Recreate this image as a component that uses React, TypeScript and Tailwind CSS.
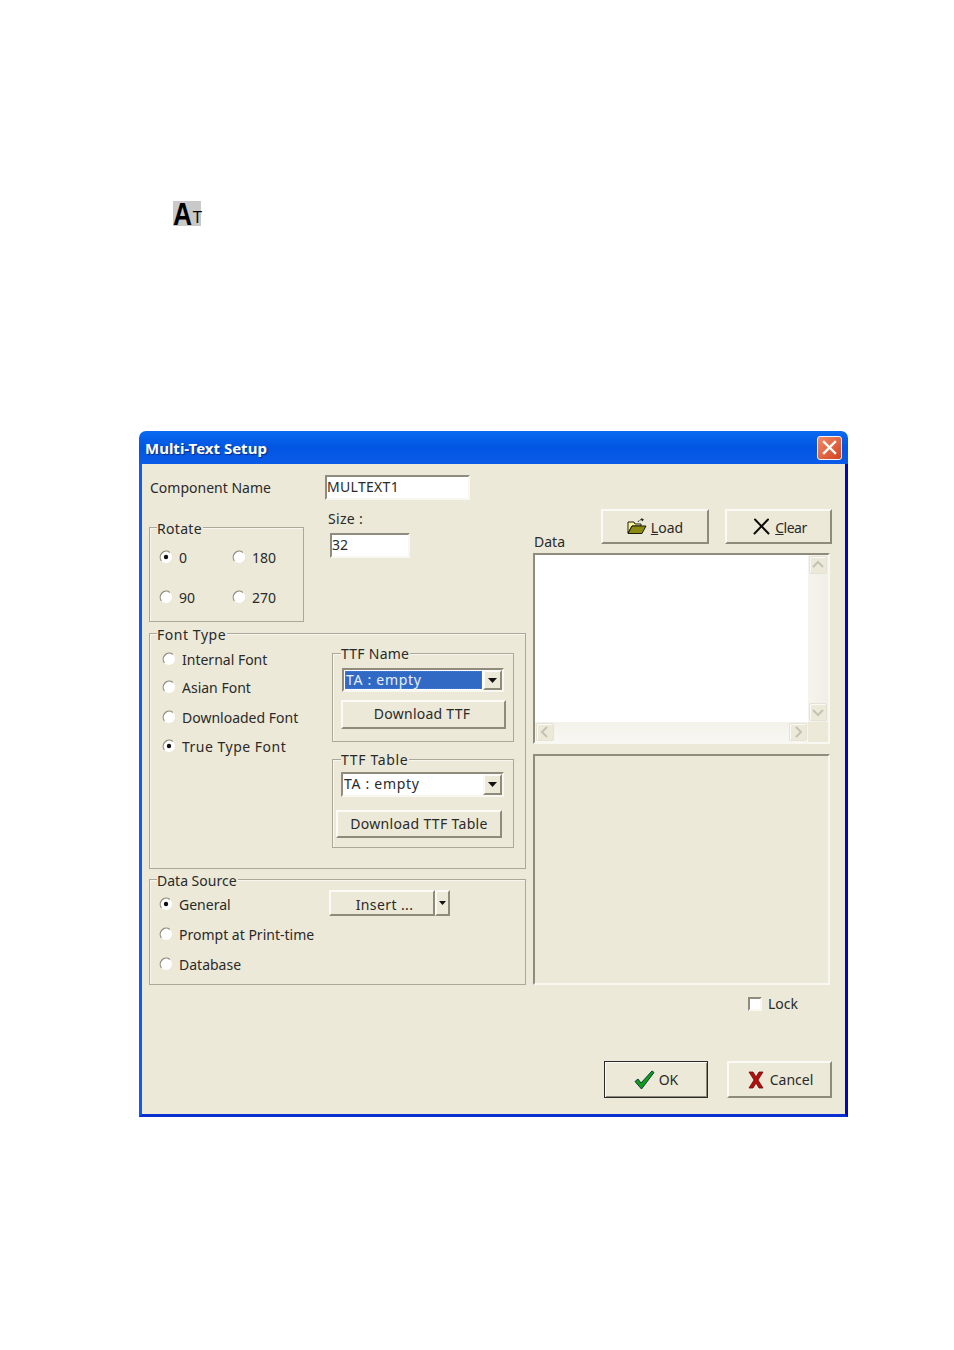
import { ReactNode } from "react"

const raised =
  "border-2 border-t-[#fbfaf6] border-l-[#fbfaf6] border-r-[#8e8b7b] border-b-[#8e8b7b] bg-[#ece9d8]"
const sunken =
  "border-2 border-t-[#8f8c7d] border-l-[#8f8c7d] border-r-[#f8f7f1] border-b-[#f8f7f1]"
const group =
  "relative border border-[#aaa89b] shadow-[inset_1px_1px_0_#f7f6ef]"

function Radio({
  checked,
  label,
  className,
  labelClass,
}: {
  checked?: boolean
  label: string
  className?: string
  labelClass?: string
}) {
  return (
    <div className={`flex h-[16px] items-center gap-[6px] ${className ?? ""}`}>
      <svg width="14" height="14" viewBox="0 0 14 14" className="shrink-0">
        <circle cx="7" cy="7" r="6" fill="#ffffff" />
        <path d="M10.8 2.4A6 6 0 0 0 2.4 10.8" fill="none" stroke="#8f8c7d" strokeWidth="1.2" />
        {checked && <circle cx="7" cy="7" r="2.2" fill="#111111" />}
      </svg>
      <span className={`whitespace-nowrap pt-[2px] ${labelClass ?? ""}`}>{label}</span>
    </div>
  )
}

function Group({
  title,
  className,
  titleClass = "left-[7px] top-[-7px]",
  children,
}: {
  title: string
  className: string
  titleClass?: string
  children: ReactNode
}) {
  return (
    <div className={`${group} ${className}`}>
      <span className={`absolute bg-[#ece9d8] pr-[1px] leading-[16px] ${titleClass}`}>{title}</span>
      {children}
    </div>
  )
}

function Arrow() {
  return (
    <svg width="9" height="5" viewBox="0 0 9 5">
      <path d="M0 0h9L4.5 5z" fill="#111111" />
    </svg>
  )
}

function Select({ selected, className }: { selected?: boolean; className: string }) {
  return (
    <div className={`${sunken} flex bg-white ${className}`}>
      <div className="flex min-w-0 flex-1 items-center p-[1px] tracking-[0.7px]">
        {selected ? (
          <span className="flex h-full w-full items-center border border-dotted border-[#7a7a50] bg-[#316ac5] text-[#e8eefa]">
            TA : empty
          </span>
        ) : (
          <span className="mt-[-1px]">TA : empty</span>
        )}
      </div>
      <div className={`${raised} flex w-[19px] items-center justify-center`}>
        <Arrow />
      </div>
    </div>
  )
}

function ScrollButton({ dir, className }: { dir: "up" | "down" | "left" | "right"; className?: string }) {
  const points = {
    up: "3,10 8,5 13,10",
    down: "3,6 8,11 13,6",
    left: "10,3 5,8 10,13",
    right: "6,3 11,8 6,13",
  }[dir]
  return (
    <div className={`h-[18px] w-[18px] shrink-0 rounded-[2px] border border-[#e4e2d6] bg-[#ece9d8] shadow-[inset_1px_1px_0_#fbfaf6] ${className ?? ""}`}>
      <svg width="16" height="16" viewBox="0 0 16 16">
        <polyline points={points} fill="none" stroke="#c4c2b6" strokeWidth="2" />
      </svg>
    </div>
  )
}

function FolderIcon() {
  return (
    <svg width="20" height="17" viewBox="0 0 20 17">
      <path d="M11 4c1-2 3-3 5-2" fill="none" stroke="#222" strokeWidth="1" strokeDasharray="2 1" />
      <path d="M14 0l3 1.500-2 2z" fill="#222" />
      <path d="M1 15V4h6l1 2h6v2H5L1 15z" fill="#fbf59a" stroke="#1c1c10" strokeWidth="1" />
      <path d="M1 15.500 5 8h14l-4 7.500z" fill="#8b8b12" stroke="#1c1c10" strokeWidth="1" />
    </svg>
  )
}

function ClearIcon() {
  return (
    <svg width="17" height="17" viewBox="0 0 17 17">
      <path d="M2 1.500 15.500 15.500M15 1.500 1.500 15.500" stroke="#0c0c0c" strokeWidth="2" strokeLinecap="round" />
    </svg>
  )
}

function CheckIcon() {
  return (
    <svg width="21" height="20" viewBox="0 0 21 20">
      <path d="M1 11.500 4 9l3 4L18 1l2 1.500L7.500 19z" fill="#0f9d1a" stroke="#0c3a40" strokeWidth="1" />
    </svg>
  )
}

function CancelIcon() {
  return (
    <svg width="16" height="18" viewBox="0 0 16 18">
      <path d="M1 1h4l3 5 3-5h4l-5 8 5 8h-4l-3-5-3 5H1l5-8z" fill="#b00f0f" stroke="#7a0808" strokeWidth="0.8" />
    </svg>
  )
}

export default function App() {
  return (
    <div className="h-[1350px] w-[954px] overflow-hidden bg-white pt-[201px] font-['Noto_Sans',sans-serif] text-[14px] leading-[16px] text-[#2a2a2a]">
      {/* toolbar glyph */}
      <div className="ml-[173px] flex h-[25px] w-[28px] items-end bg-[#c9c9c9] font-['Liberation_Sans',sans-serif] leading-none text-black">
        <span className="mr-[-3px] origin-left scale-x-[0.85] text-[31px] font-bold leading-[23px]">A</span>
        <span className="mb-[2px] text-[16px] leading-[12px]">T</span>
      </div>

      {/* dialog */}
      <div className="ml-[139px] mt-[205px] h-[686px] w-[709px] overflow-hidden rounded-t-[7px]">
        <div className="flex h-[33px] items-center justify-between bg-gradient-to-b from-[#0a6af0] via-[#0255e2] to-[#0a5ce8] pl-[6px] pr-[6px]">
          <span className="text-[15px] font-bold text-white [text-shadow:1px_1px_1px_#0a2a80]">
            Multi-Text Setup
          </span>
          <div className="flex h-[24px] w-[25px] items-center justify-center rounded-[3px] border border-[#f5f5f5] bg-gradient-to-br from-[#f08a66] to-[#d2401c]">
            <svg width="15" height="15" viewBox="0 0 15 15">
              <path d="M2 2 13 13M13 2 2 13" stroke="#ffffff" strokeWidth="2.400" strokeLinecap="square" />
            </svg>
          </div>
        </div>

        <div className="flex h-[653px] border-b-[3px] border-l-[3px] border-r-[3px] border-b-[#0a2fd0] border-l-[#0c5cf0] border-r-[#0008c4] bg-[#ece9d8] pl-[7px]">
          {/* left column */}
          <div className="w-[378px] shrink-0">
            <div className="mt-[11px] flex h-[25px] items-center">
              <span className="ml-[1px] w-[175px]">Component Name</span>
              <div className={`${sunken} h-[25px] w-[145px] bg-white leading-[20px] tracking-[0.3px]`}>MULTEXT1</div>
            </div>

            <div className="mt-[11px] flex h-[111px]">
              <Group title="Rotate" className="mt-[16px] h-[95px] w-[155px]" titleClass="left-[7px] top-[-7px] tracking-[0.3px]">
                <div className="grid grid-cols-[72px_72px] gap-y-[24px] pl-[9px] pt-[21px]">
                  <Radio checked label="0" />
                  <Radio label="180" className="ml-[1px]" />
                  <Radio label="90" />
                  <Radio label="270" className="ml-[1px]" />
                </div>
              </Group>
              <div className="ml-[24px]">
                <div className="leading-[15px] tracking-[0.3px]">Size :</div>
                <div className={`${sunken} ml-[2px] mt-[7px] h-[25px] w-[80px] bg-white leading-[20px]`}>32</div>
              </div>
            </div>

            <Group title="Font Type" className="mt-[11px] flex h-[236px] w-[377px]" titleClass="left-[7px] top-[-7px] tracking-[0.55px]">
              <div className="w-[182px] shrink-0 pl-[12px] pt-[17px]">
                <Radio label="Internal Font" />
                <Radio label="Asian Font" className="mt-[12px]" />
                <Radio label="Downloaded Font" className="mt-[14px]" />
                <Radio checked label="True Type Font" className="mt-[13px]" labelClass="tracking-[0.5px]" />
              </div>
              <div>
                <Group
                  title="TTF Name"
                  className="mt-[19px] h-[89px] w-[182px]"
                  titleClass="left-[8px] top-[-8px] tracking-[0.25px]"
                >
                  <Select selected className="ml-[9px] mt-[14px] h-[24px] w-[162px]" />
                  <div className={`${raised} ml-[8px] mt-[8px] flex h-[29px] w-[165px] items-center justify-center pb-[2px] pr-[3px] tracking-[0.25px]`}>
                    Download TTF
                  </div>
                </Group>
                <Group
                  title="TTF Table"
                  className="mt-[17px] h-[89px] w-[182px]"
                  titleClass="left-[8px] top-[-8px] tracking-[0.66px]"
                >
                  <Select className="ml-[8px] mt-[12px] h-[25px] w-[163px]" />
                  <div className={`${raised} ml-[3px] mt-[13px] flex h-[28px] w-[166px] items-center justify-center tracking-[0.33px]`}>
                    Download TTF Table
                  </div>
                </Group>
              </div>
            </Group>

            <Group title="Data Source" className="mt-[10px] flex h-[106px] w-[377px]">
              <div className="w-[179px] shrink-0 pl-[9px] pt-[16px]">
                <Radio checked label="General" />
                <Radio label="Prompt at Print-time" className="mt-[14px]" />
                <Radio label="Database" className="mt-[14px]" />
              </div>
              <div className="mt-[10px] flex h-[26px] w-[121px]">
                <div className={`${raised} flex flex-1 items-center justify-center pl-[5px] pt-[3px] tracking-[0.4px]`}>Insert ...</div>
                <div className={`${raised} flex w-[15px] items-center justify-center`}>
                  <svg width="7" height="4" viewBox="0 0 7 4">
                    <path d="M0 0h7L3.500 4z" fill="#111111" />
                  </svg>
                </div>
              </div>
            </Group>
          </div>

          {/* right column */}
          <div className="ml-[7px] w-[298px] shrink-0">
            <div className="mt-[45px] flex h-[35px]">
              <span className="mb-[-6px] flex w-[67px] items-end">Data</span>
              <div className={`${raised} flex h-[35px] w-[108px] items-center justify-center gap-[4px]`}>
                <FolderIcon />
                <span className="pt-[2px]">
                  <u>L</u>oad
                </span>
              </div>
              <div className={`${raised} ml-[16px] flex h-[35px] w-[107px] items-center justify-center gap-[5px] pl-[3px]`}>
                <ClearIcon />
                <span className="pt-[2px] tracking-[-0.5px]">
                  <u>C</u>lear
                </span>
              </div>
            </div>

            <div className={`${sunken} ml-[-1px] mt-[9px] flex h-[191px] w-[297px] flex-col`}>
              <div className="flex min-h-0 flex-1">
                <div className="flex-1 bg-white" />
                <div className="flex w-[20px] flex-col items-center justify-between bg-gradient-to-r from-[#f5f4ee] to-[#f0efe6] py-[1px]">
                  <ScrollButton dir="up" />
                  <ScrollButton dir="down" />
                </div>
              </div>
              <div className="flex h-[20px] shrink-0">
                <div className="flex flex-1 items-center justify-between bg-gradient-to-b from-[#f3f2ea] to-[#f8f7f2] px-[1px]">
                  <ScrollButton dir="left" />
                  <ScrollButton dir="right" />
                </div>
                <div className="w-[20px] bg-[#ece9d8]" />
              </div>
            </div>

            <div className={`${sunken} ml-[-1px] mt-[10px] h-[231px] w-[297px]`} />

            <div className="ml-[214px] mt-[11px] flex h-[15px] items-center gap-[6px]">
              <div className={`${sunken} h-[14px] w-[14px] border bg-white`} />
              <span>Lock</span>
            </div>

            <div className="ml-[70px] mt-[50px] flex">
              <div className="flex h-[37px] w-[104px] items-center justify-center gap-[4px] border border-[#2a2a2a] bg-[#ece9d8] shadow-[inset_1px_1px_0_#fbfaf6,inset_-1px_-1px_0_#8e8b7b]">
                <CheckIcon />
                <span>OK</span>
              </div>
              <div className={`${raised} ml-[19px] flex h-[37px] w-[105px] items-center justify-center gap-[6px] pl-[2px]`}>
                <CancelIcon />
                <span>Cancel</span>
              </div>
            </div>
          </div>
        </div>
      </div>
    </div>
  )
}
